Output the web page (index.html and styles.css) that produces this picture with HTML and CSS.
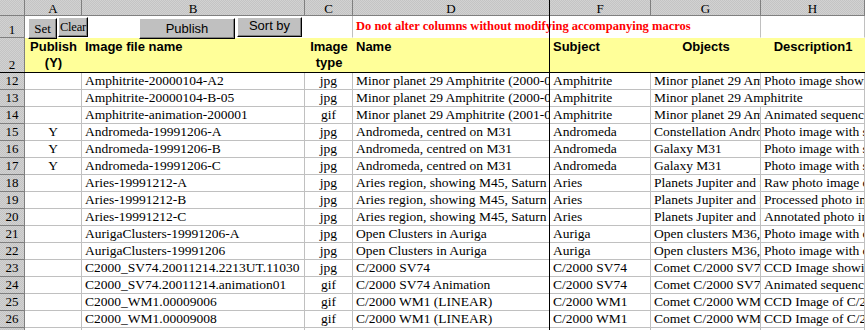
FILE: index.html
```html
<!DOCTYPE html>
<html>
  <head>
    <meta charset="UTF-8" />
    <title>Image catalogue</title>
    <link rel="stylesheet" href="styles.css">
  </head>
  <body>
    <div class="sheet">
      <!-- column letters (E is hidden) -->
      <div class="row">
        <div class="hd"></div>
        <div class="hd">A</div>
        <div class="hd">B</div>
        <div class="hd">C</div>
        <div class="hd">D</div>
        <div class="hd">F</div>
        <div class="hd">G</div>
        <div class="hd">H</div>
      </div>

      <!-- row 1: macro buttons + warning -->
      <div class="row">
        <div class="rh top-row">1</div>
        <div class="c r1 span3 buttons">
          <button class="btn btn-set">Set</button>
          <button class="btn btn-clear">Clear</button>
          <button class="btn btn-publish">Publish</button>
          <button class="btn btn-sort">Sort by</button>
        </div>
        <div class="c r1 span3 warning">Do not alter columns without modifying accompanying macros</div>
        <div class="c r1"></div>
      </div>

      <!-- row 2: titles -->
      <div class="row">
        <div class="rh top-row">2</div>
        <div class="t ctr">Publish (Y)</div>
        <div class="t">Image file name</div>
        <div class="t ctr">Image type</div>
        <div class="t">Name</div>
        <div class="t">Subject</div>
        <div class="t ctr">Objects</div>
        <div class="t ctr">Description1</div>
      </div>

      <div class="row">
        <div class="rh">12</div>
        <div class="c ctr"></div>
        <div class="c">Amphitrite-20000104-A2</div>
        <div class="c ctr">jpg</div>
        <div class="c">Minor planet 29 Amphitrite (2000-01-04)</div>
        <div class="c">Amphitrite</div>
        <div class="c">Minor planet 29 Amphitrite</div>
        <div class="c">Photo image showing minor planet 29 Amphitrite</div>
      </div>
      <div class="row">
        <div class="rh">13</div>
        <div class="c ctr"></div>
        <div class="c">Amphitrite-20000104-B-05</div>
        <div class="c ctr">jpg</div>
        <div class="c">Minor planet 29 Amphitrite (2000-01-04)</div>
        <div class="c">Amphitrite</div>
        <div class="c span2">Minor planet 29 Amphitrite</div>
      </div>
      <div class="row">
        <div class="rh">14</div>
        <div class="c ctr"></div>
        <div class="c">Amphitrite-animation-200001</div>
        <div class="c ctr">gif</div>
        <div class="c">Minor planet 29 Amphitrite (2001-01-04)</div>
        <div class="c">Amphitrite</div>
        <div class="c">Minor planet 29 Amphitrite</div>
        <div class="c">Animated sequence of minor planet 29 Amphitrite</div>
      </div>
      <div class="row">
        <div class="rh">15</div>
        <div class="c ctr">Y</div>
        <div class="c">Andromeda-19991206-A</div>
        <div class="c ctr">jpg</div>
        <div class="c">Andromeda, centred on M31</div>
        <div class="c">Andromeda</div>
        <div class="c">Constellation Andromeda</div>
        <div class="c">Photo image with stars</div>
      </div>
      <div class="row">
        <div class="rh">16</div>
        <div class="c ctr">Y</div>
        <div class="c">Andromeda-19991206-B</div>
        <div class="c ctr">jpg</div>
        <div class="c">Andromeda, centred on M31</div>
        <div class="c">Andromeda</div>
        <div class="c">Galaxy M31</div>
        <div class="c">Photo image with stars</div>
      </div>
      <div class="row">
        <div class="rh">17</div>
        <div class="c ctr">Y</div>
        <div class="c">Andromeda-19991206-C</div>
        <div class="c ctr">jpg</div>
        <div class="c">Andromeda, centred on M31</div>
        <div class="c">Andromeda</div>
        <div class="c">Galaxy M31</div>
        <div class="c">Photo image with stars</div>
      </div>
      <div class="row">
        <div class="rh">18</div>
        <div class="c ctr"></div>
        <div class="c">Aries-19991212-A</div>
        <div class="c ctr">jpg</div>
        <div class="c">Aries region, showing M45, Saturn and Jupiter</div>
        <div class="c">Aries</div>
        <div class="c">Planets Jupiter and Saturn</div>
        <div class="c">Raw photo image of Aries</div>
      </div>
      <div class="row">
        <div class="rh">19</div>
        <div class="c ctr"></div>
        <div class="c">Aries-19991212-B</div>
        <div class="c ctr">jpg</div>
        <div class="c">Aries region, showing M45, Saturn and Jupiter</div>
        <div class="c">Aries</div>
        <div class="c">Planets Jupiter and Saturn</div>
        <div class="c">Processed photo image of Aries</div>
      </div>
      <div class="row">
        <div class="rh">20</div>
        <div class="c ctr"></div>
        <div class="c">Aries-19991212-C</div>
        <div class="c ctr">jpg</div>
        <div class="c">Aries region, showing M45, Saturn and Jupiter</div>
        <div class="c">Aries</div>
        <div class="c">Planets Jupiter and Saturn</div>
        <div class="c">Annotated photo image of Aries</div>
      </div>
      <div class="row">
        <div class="rh">21</div>
        <div class="c ctr"></div>
        <div class="c">AurigaClusters-19991206-A</div>
        <div class="c ctr">jpg</div>
        <div class="c">Open Clusters in Auriga</div>
        <div class="c">Auriga</div>
        <div class="c">Open clusters M36, M37 and M38</div>
        <div class="c">Photo image with clusters</div>
      </div>
      <div class="row">
        <div class="rh">22</div>
        <div class="c ctr"></div>
        <div class="c">AurigaClusters-19991206</div>
        <div class="c ctr">jpg</div>
        <div class="c">Open Clusters in Auriga</div>
        <div class="c">Auriga</div>
        <div class="c">Open clusters M36, M37 and M38</div>
        <div class="c">Photo image with clusters</div>
      </div>
      <div class="row">
        <div class="rh">23</div>
        <div class="c ctr"></div>
        <div class="c">C2000_SV74.20011214.2213UT.11030</div>
        <div class="c ctr">jpg</div>
        <div class="c">C/2000 SV74</div>
        <div class="c">C/2000 SV74</div>
        <div class="c">Comet C/2000 SV74</div>
        <div class="c">CCD Image showing comet C/2000 SV74</div>
      </div>
      <div class="row">
        <div class="rh">24</div>
        <div class="c ctr"></div>
        <div class="c">C2000_SV74.20011214.animation01</div>
        <div class="c ctr">gif</div>
        <div class="c">C/2000 SV74 Animation</div>
        <div class="c">C/2000 SV74</div>
        <div class="c">Comet C/2000 SV74</div>
        <div class="c">Animated sequence of comet C/2000 SV74</div>
      </div>
      <div class="row">
        <div class="rh">25</div>
        <div class="c ctr"></div>
        <div class="c">C2000_WM1.00009006</div>
        <div class="c ctr">gif</div>
        <div class="c">C/2000 WM1 (LINEAR)</div>
        <div class="c">C/2000 WM1</div>
        <div class="c">Comet C/2000 WM1</div>
        <div class="c">CCD Image of C/2000 WM1</div>
      </div>
      <div class="row">
        <div class="rh">26</div>
        <div class="c ctr"></div>
        <div class="c">C2000_WM1.00009008</div>
        <div class="c ctr">gif</div>
        <div class="c">C/2000 WM1 (LINEAR)</div>
        <div class="c">C/2000 WM1</div>
        <div class="c">Comet C/2000 WM1</div>
        <div class="c">CCD Image of C/2000 WM1</div>
      </div>
      <div class="row">
        <div class="rh">27</div>
        <div class="c"></div>
        <div class="c"></div>
        <div class="c"></div>
        <div class="c"></div>
        <div class="c"></div>
        <div class="c"></div>
        <div class="c"></div>
      </div>

      <!-- frozen pane split lines -->
      <div class="freeze-v"></div>
      <div class="freeze-h"></div>
    </div>
  </body>
</html>
```

FILE: styles.css
```css
body {
  margin: 0;
  background: #fff;
  overflow: hidden;
}

.sheet {
  position: relative;
  display: grid;
  grid-template-columns: 25px 57px 223px 48px 197px 101px 110px 104px;
  grid-template-rows: 16px 22px 35px;
  grid-auto-rows: 17px;
  width: 865px;
  font-family: "Liberation Serif", serif;
  font-size: 13.5px;
  color: #000;
}

.row {
  display: contents;
}

/* column letters and row numbers */
.hd,
.rh {
  background-color: #c0c0c0;
  background-image: repeating-conic-gradient(#c4c4c4 0 25%, #d2d2d2 0 50%);
  background-size: 2px 2px;
  border-right: 1px solid #808080;
  border-bottom: 1px solid #808080;
  font-size: 13px;
  text-align: center;
}
.hd {
  padding-top: 2px;
  line-height: 13px;
}
.rh {
  line-height: 16px;
}
.rh.top-row {
  display: flex;
  align-items: flex-end;
  justify-content: center;
  line-height: 15px;
}

/* ordinary cells */
.c {
  border-right: 1px solid #c0c0c0;
  border-bottom: 1px solid #c0c0c0;
  padding: 0 3px;
  line-height: 16px;
  white-space: nowrap;
  overflow: hidden;
}
.ctr {
  text-align: center;
}
.span2 {
  grid-column: span 2;
}
.span3 {
  grid-column: span 3;
}

/* row 1 */
.r1 {
  border-bottom-color: #fff;
}
.buttons {
  display: flex;
  align-items: flex-start;
  padding: 0;
  overflow: visible;
  position: relative;
  z-index: 1;
}
.btn {
  box-sizing: border-box;
  margin: 0;
  padding: 0;
  background: #c0c0c0;
  color: #000;
  border: 1px solid;
  border-color: #fff #000 #000 #fff;
  box-shadow: inset -1px -1px #808080;
  font-family: "Liberation Sans", sans-serif;
  font-size: 13px;
  line-height: 16px;
  white-space: nowrap;
}
.btn-set {
  margin: 2px 0 0 3px;
  width: 29px;
  height: 21px;
  font-family: "Liberation Serif", serif;
}
.btn-clear {
  margin: 1px 0 0 1px;
  width: 30px;
  height: 20px;
  font-family: "Liberation Serif", serif;
  font-size: 12.5px;
  letter-spacing: -0.2px;
}
.btn-publish {
  margin: 2px 0 0 51px;
  width: 96px;
  height: 21px;
}
.btn-sort {
  margin: 1px 0 0 2px;
  width: 65px;
  height: 20px;
  padding-bottom: 3px;
}
.warning {
  color: #f00;
  font-weight: bold;
  font-size: 12.5px;
  line-height: 18px;
  padding-top: 1px;
}

/* row 2 */
.t {
  background: #ffff99;
  padding: 1px 3px 0;
  font-family: "Liberation Sans", sans-serif;
  font-weight: bold;
  font-size: 13px;
  line-height: 16px;
}
.t.ctr {
  padding: 1px 0 0;
}

.freeze-v {
  position: absolute;
  top: 0;
  bottom: 0;
  left: 549px;
  width: 1px;
  background: #000;
}
.freeze-h {
  position: absolute;
  top: 72px;
  left: 0;
  right: 0;
  height: 1px;
  background: #000;
}
```
